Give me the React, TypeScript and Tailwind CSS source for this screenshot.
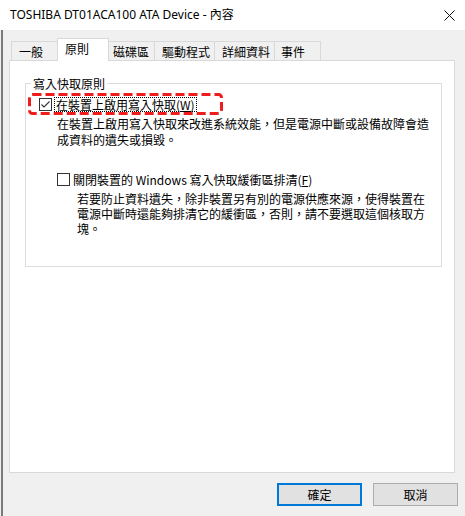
import { ReactNode } from "react";

const tabs = [
  { label: "一般", cls: "w-[46px] h-[19px] pl-[7px] border-l border-t bg-[#f0f0f0]" },
  { label: "原則", cls: "w-[52px] h-[23px] pl-[7px] pb-[4px] border-l border-t border-r bg-white -mb-px relative z-10", active: true },
  { label: "磁碟區", cls: "w-[45px] h-[19px] pl-[4px] border-t bg-[#f0f0f0]" },
  { label: "驅動程式", cls: "w-[60px] h-[19px] pl-[7px] border-l border-t bg-[#f0f0f0]" },
  { label: "詳細資料", cls: "w-[60px] h-[19px] pl-[7px] border-l border-t bg-[#f0f0f0]" },
  { label: "事件", cls: "w-[47px] h-[19px] pl-[6px] border-l border-t border-r bg-[#f0f0f0]" },
];

const CheckBox = ({ checked }: { checked?: boolean }) => (
  <svg width="13" height="13" viewBox="0 0 13 13" className="shrink-0">
    <rect x="0.5" y="0.5" width="12" height="12" fill="white" stroke="#333" />
    {checked && (
      <polyline points="2.5,6.5 5,9 10.5,3.5" fill="none" stroke="#333" strokeWidth="1.1" />
    )}
  </svg>
);

const Button = ({ children, primary }: { children: ReactNode; primary?: boolean }) => (
  <button
    className={
      primary
        ? "w-[85px] h-[23px] bg-[#e1e1e1] border-2 border-[#0078d7] text-[12px] leading-none text-black"
        : "w-[85px] h-[23px] bg-[#e1e1e1] border border-[#adadad] text-[12px] leading-none text-black"
    }
  >
    {children}
  </button>
);

export default function App() {
  return (
    <div className="w-[465px] h-[516px] bg-[#f0f0f0] flex flex-col text-black font-['Noto_Sans_CJK_TC',sans-serif] overflow-hidden">
      {/* title bar */}
      <div className="h-[30px] bg-white flex items-center justify-between pl-[10px] pr-[10px] shrink-0">
        <span className="text-[12px] font-['Noto_Sans','Noto_Sans_CJK_TC',sans-serif]">
          TOSHIBA DT01ACA100 ATA Device - 內容
        </span>
        <svg width="11" height="11" viewBox="0 0 11 11">
          <path d="M0.5 0.5 L10.5 10.5 M10.5 0.5 L0.5 10.5" stroke="#111" strokeWidth="1" />
        </svg>
      </div>

      <div className="flex-1 ml-px border-l-2 border-[#7a7a7a] pl-[6px] pr-[7px] pt-[8px] flex flex-col">
        {/* tabs */}
        <div className="flex items-end ml-[2px] h-[22px]">
          {tabs.map((t) => (
            <div
              key={t.label}
              className={`${t.cls} border-[#d9d9d9] flex items-center text-[12px] leading-[15px] whitespace-nowrap`}
            >
              {t.label}
            </div>
          ))}
        </div>

        {/* panel */}
        <div className="w-[446px] h-[413px] bg-white border border-[#d9d9d9] pl-[15px] pt-[15px]">
          <fieldset className="w-[417px] border border-[#dcdcdc] pb-[30px]">
            <legend className="ml-[5px] px-[2px] text-[12px] leading-[15px]">寫入快取原則</legend>

            <div className="relative mt-[6px] pl-[13px] h-[15px] flex items-center">
              <svg
                width="195"
                height="22"
                className="absolute left-[2px] -top-[4px] pointer-events-none"
              >
                <rect
                  x="1.5"
                  y="1.5"
                  width="192"
                  height="19"
                  rx="3"
                  fill="none"
                  stroke="#ee1c1c"
                  strokeWidth="3"
                  strokeDasharray="9 4"
                />
              </svg>
              <CheckBox checked />
              <span className="ml-[2px] px-px border border-dotted border-black text-[12px] leading-[13px] whitespace-nowrap">
                在裝置上啟用寫入快取(<span className="underline">W</span>)
              </span>
            </div>

            <p className="mt-[4px] pl-[31px] text-[12px] leading-[16px] whitespace-nowrap">
              <span className="block">在裝置上啟用寫入快取來改進系統效能，但是電源中斷或設備故障會造</span>
              <span className="block">成資料的遺失或損毀。</span>
            </p>

            <div className="mt-[24px] pl-[31px] h-[15px] flex items-center gap-[3px]">
              <CheckBox />
              <span className="text-[12px] leading-[15px] whitespace-nowrap">
                關閉裝置的 Windows 寫入快取緩衝區排清(<span className="underline">F</span>)
              </span>
            </div>

            <p className="mt-[4px] pl-[51px] text-[12px] leading-[15px] whitespace-nowrap">
              <span className="block">若要防止資料遺失，除非裝置另有別的電源供應來源，使得裝置在</span>
              <span className="block">電源中斷時還能夠排清它的緩衝區，否則，請不要選取這個核取方</span>
              <span className="block">塊。</span>
            </p>
          </fieldset>
        </div>

        {/* buttons */}
        <div className="mt-[10px] flex justify-end gap-[11px]">
          <Button primary>確定</Button>
          <Button>取消</Button>
        </div>
      </div>
    </div>
  );
}
